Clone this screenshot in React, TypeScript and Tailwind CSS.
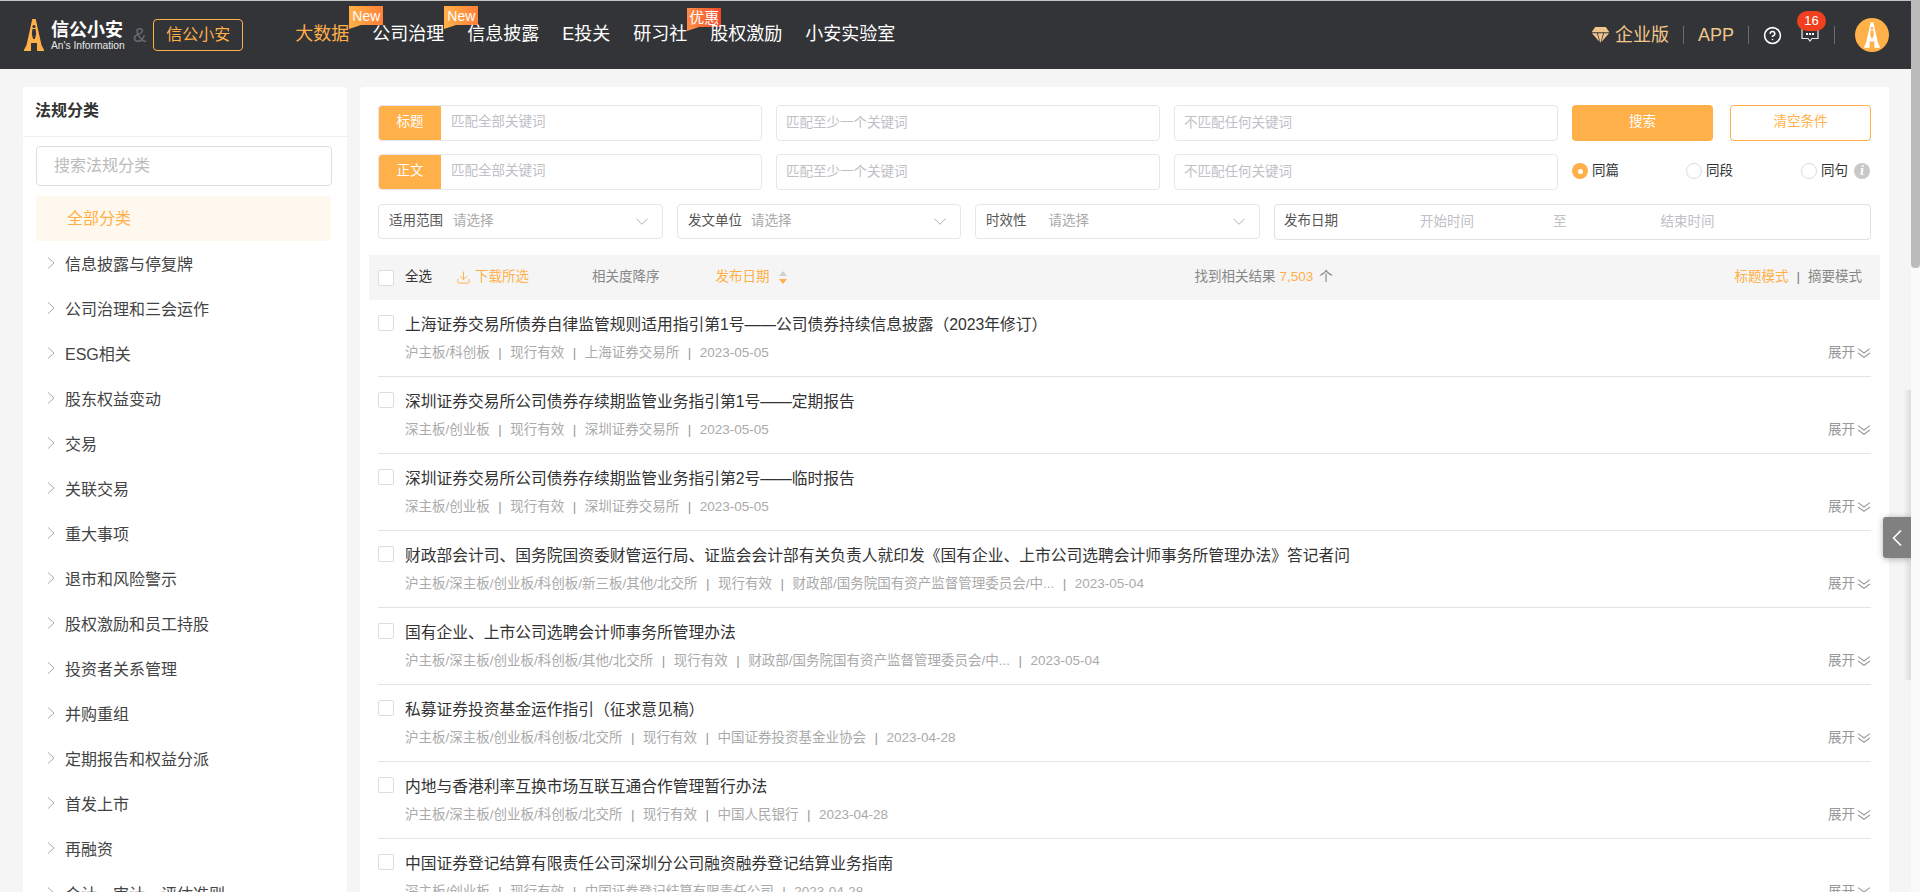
import { ChevronLeft, CircleHelp, Download } from "lucide-react";

const navItems = [
  { label: "大数据", active: true, badge: "New" },
  { label: "公司治理", badge: "New" },
  { label: "信息披露" },
  { label: "E投关" },
  { label: "研习社", badge: "优惠" },
  { label: "股权激励" },
  { label: "小安实验室" },
];

const categories = [
  "信息披露与停复牌",
  "公司治理和三会运作",
  "ESG相关",
  "股东权益变动",
  "交易",
  "关联交易",
  "重大事项",
  "退市和风险警示",
  "股权激励和员工持股",
  "投资者关系管理",
  "并购重组",
  "定期报告和权益分派",
  "首发上市",
  "再融资",
  "会计、审计、评估准则",
];

const results = [
  {
    title: "上海证券交易所债券自律监管规则适用指引第1号——公司债券持续信息披露（2023年修订）",
    meta: ["沪主板/科创板", "现行有效", "上海证券交易所", "2023-05-05"],
  },
  {
    title: "深圳证券交易所公司债券存续期监管业务指引第1号——定期报告",
    meta: ["深主板/创业板", "现行有效", "深圳证券交易所", "2023-05-05"],
  },
  {
    title: "深圳证券交易所公司债券存续期监管业务指引第2号——临时报告",
    meta: ["深主板/创业板", "现行有效", "深圳证券交易所", "2023-05-05"],
  },
  {
    title: "财政部会计司、国务院国资委财管运行局、证监会会计部有关负责人就印发《国有企业、上市公司选聘会计师事务所管理办法》答记者问",
    meta: ["沪主板/深主板/创业板/科创板/新三板/其他/北交所", "现行有效", "财政部/国务院国有资产监督管理委员会/中...", "2023-05-04"],
  },
  {
    title: "国有企业、上市公司选聘会计师事务所管理办法",
    meta: ["沪主板/深主板/创业板/科创板/其他/北交所", "现行有效", "财政部/国务院国有资产监督管理委员会/中...", "2023-05-04"],
  },
  {
    title: "私募证券投资基金运作指引（征求意见稿）",
    meta: ["沪主板/深主板/创业板/科创板/北交所", "现行有效", "中国证券投资基金业协会", "2023-04-28"],
  },
  {
    title: "内地与香港利率互换市场互联互通合作管理暂行办法",
    meta: ["沪主板/深主板/创业板/科创板/北交所", "现行有效", "中国人民银行", "2023-04-28"],
  },
  {
    title: "中国证券登记结算有限责任公司深圳分公司融资融券登记结算业务指南",
    meta: ["深主板/创业板", "现行有效", "中国证券登记结算有限责任公司", "2023-04-28"],
  },
];

const Tower = ({ className, body, cut }: { className: string; body: string; cut: string }) => (
  <svg viewBox="0 0 20 32" className={className}>
    <path fill={body} d="M8.3 0H11.7L15 15L17.5 26L20 31V32H13V24H7V32H0V31L2.5 26L5 15Z" />
    <circle cx="10" cy="7.5" r="1.6" fill={cut} />
    <path fill={cut} d="M8.4 10H11.6L12.2 15L10.9 20H9.1L7.8 15Z" />
  </svg>
);

const Badge = ({ text }: { text: string }) => {
  const hot = text === "优惠";
  return (
    <span className={`absolute left-full flex h-[19px] w-[34px] items-center justify-center ${hot ? "top-[-14px] bg-gradient-to-r from-[#ff8a45] to-[#f0482a] text-[15px]" : "top-[-16px] bg-gradient-to-r from-[#ffb048] to-[#ff8038] text-[14px]"} leading-none text-white`}>
      {text}
      <svg viewBox="0 0 12 4" className="absolute left-0 top-full h-[4px] w-[12px]">
        <path d="M0 0H12L0 4Z" fill={hot ? "#ff8a45" : "#ffb048"} />
      </svg>
    </span>
  );
};

const Header = () => (
  <header className="flex h-[69px] shrink-0 items-center border-t border-[#c4c4c4] bg-[#333438] pl-[24px] pr-[22px]">
    <Tower className="h-[32px] w-[20px]" body="#ffb048" cut="#333438" />
    <div className="ml-[7px] flex w-[74px] flex-col">
      <span className="text-[18px] font-bold leading-[20px] text-white">信公小安</span>
      <span className="whitespace-nowrap text-[10.25px] leading-[11px] text-[#e8e8e8]">An's Information</span>
    </div>
    <span className="ml-[8px] text-[20px] leading-none text-[#666a70]">&amp;</span>
    <button className="ml-[7px] h-[32px] w-[90px] rounded-[4px] border border-[#ffb048] text-[16px] text-[#ffb048]">信公小安</button>
    <nav className="mb-[2px] ml-[52px] flex items-center gap-[23px]">
      {navItems.map((item) => (
        <a key={item.label} className={`relative whitespace-nowrap text-[18px] leading-[24px] ${item.active ? "text-[#ffb048]" : "text-white"}`}>
          {item.label}
          {item.badge && <Badge text={item.badge} />}
        </a>
      ))}
    </nav>
    <div className="ml-auto flex items-center text-[18px] text-[#f0c68a]">
      <svg viewBox="0 0 20 18" className="h-[16px] w-[19px]">
        <path fill="#eec58c" d="M4 0H16L20 6H0ZM.3 7H6L9 17ZM7 7H13L10 18ZM14 7H19.7L11 17Z" />
      </svg>
      <span className="ml-[5px]">企业版</span>
      <span className="mx-[14px] h-[18px] w-px bg-[#6b6c70]" />
      <span>APP</span>
      <span className="mx-[14px] h-[18px] w-px bg-[#6b6c70]" />
      <CircleHelp className="text-white" size={19} strokeWidth={2} />
      <span className="relative ml-[19px] flex">
        <svg viewBox="0 0 18 14" className="h-[14px] w-[18px]">
          <path fill="none" stroke="#e8e8e8" strokeWidth="1.2" d="M1 .6H17V10.5H11L9 13L7 10.5H1Z" />
          <path fill="#fff" d="M5 5H7V7H5ZM8 5H10V7H8ZM11 5H13V7H11Z" />
        </svg>
        <span className="absolute left-[-4px] top-[-17px] flex h-[20px] w-[29px] items-center justify-center rounded-full bg-[#f0401e] text-[13px] text-white">16</span>
      </span>
      <span className="ml-[15px] h-[18px] w-px bg-[#6b6c70]" />
      <span className="ml-[20px] flex h-[34px] w-[34px] items-center justify-center rounded-full bg-[#ffb048]">
        <Tower className="h-[26px] w-[16px]" body="#fff" cut="#ffb048" />
      </span>
    </div>
  </header>
);

const Sidebar = () => (
  <aside className="h-[900px] w-[324px] shrink-0 rounded-t-[4px] bg-white">
    <h2 className="flex h-[50px] items-center border-b border-[#eeeef3] pb-[2px] pl-[12px] text-[16px] font-bold text-[#333]">法规分类</h2>
    <div className="px-[13px] pt-[9px]">
      <input
        placeholder="搜索法规分类"
        className="h-[40px] w-[296px] rounded-[4px] border border-[#dcdce6] px-[17px] text-[16px] outline-none placeholder:text-[#bbb]"
      />
      <div className="mt-[10px] flex h-[45px] w-[295px] items-center bg-[#fff8ef] pl-[31px] text-[16px] text-[#ffb048]">全部分类</div>
    </div>
    <ul className="mt-[1px]">
      {categories.map((name) => (
        <li key={name} className="flex h-[45px] items-center pl-[24px] text-[16px] text-[#444]">
          <svg viewBox="0 0 8 12" className="mb-[4px] h-[12px] w-[8px]">
            <path d="M1 .5L7 6L1 11.5" fill="none" stroke="#aaa" strokeWidth="1" />
          </svg>
          <span className="ml-[10px]">{name}</span>
        </li>
      ))}
    </ul>
  </aside>
);

const KeywordRow = ({ label }: { label: string }) => (
  <>
    <div className="flex h-[36px] w-[384px] overflow-hidden rounded-[4px] border border-[#e6e6ec]">
      <span className="flex w-[62px] shrink-0 items-center justify-center bg-[#ffb048] pb-[2px] text-[13.5px] text-white">{label}</span>
      <input placeholder="匹配全部关键词" className="min-w-0 flex-1 px-[10px] pb-[2px] text-[13.5px] outline-none placeholder:text-[#c0c0c6]" />
    </div>
    <input placeholder="匹配至少一个关键词" className="h-[36px] w-[384px] rounded-[4px] border border-[#e6e6ec] px-[9px] pb-[2px] text-[13.5px] outline-none placeholder:text-[#c0c0c6]" />
    <input placeholder="不匹配任何关键词" className="h-[36px] w-[384px] rounded-[4px] border border-[#e6e6ec] px-[9px] pb-[2px] text-[13.5px] outline-none placeholder:text-[#c0c0c6]" />
  </>
);

const SelectBox = ({ label, width, gap }: { label: string; width: string; gap: string }) => (
  <div className={`flex h-[35px] items-center rounded-[4px] border border-[#e6e6ec] pl-[10px] pr-[14px] text-[13.5px] ${width}`}>
    <span className="text-[#555]">{label}</span>
    <span className={`text-[#aaa] ${gap}`}>请选择</span>
    <svg viewBox="0 0 13 7" className="ml-auto h-[7px] w-[12px]">
      <path d="M.5 .5L6.5 6.5L12.5 .5" fill="none" stroke="#aaa" strokeWidth="1" />
    </svg>
  </div>
);

const Radio = ({ label, checked, width }: { label: string; checked?: boolean; width: string }) => (
  <label className={`flex items-center text-[13.5px] text-[#333] ${width}`}>
    {checked ? (
      <span className="flex h-[16px] w-[16px] items-center justify-center rounded-full bg-[#ffb048]">
        <span className="h-[5px] w-[5px] rounded-full bg-white" />
      </span>
    ) : (
      <span className="h-[16px] w-[16px] rounded-full border border-[#dcdce6]" />
    )}
    <span className="ml-[4px]">{label}</span>
  </label>
);

const Filters = () => (
  <section className="px-[18px] pt-[18px]">
    <div className="flex gap-[14px]">
      <KeywordRow label="标题" />
      <button className="h-[36px] w-[141px] rounded-[4px] bg-[#ffb048] pb-[2px] text-[13.5px] text-white">搜索</button>
      <button className="ml-[3px] h-[36px] w-[141px] rounded-[4px] border border-[#ffb048] pb-[2px] text-[13.5px] text-[#ffb048]">清空条件</button>
    </div>
    <div className="mt-[13px] flex items-center gap-[14px]">
      <KeywordRow label="正文" />
      <div className="mb-[2px] flex items-center">
        <Radio label="同篇" checked width="w-[114px]" />
        <Radio label="同段" width="w-[115px]" />
        <Radio label="同句" width="w-[53px]" />
        <span className="flex h-[16px] w-[16px] items-center justify-center rounded-full bg-[#c8c8c8] font-serif text-[13px] font-bold italic text-white">i</span>
      </div>
    </div>
    <div className="mt-[14px] flex gap-[14px]">
      <SelectBox label="适用范围" width="w-[285px]" gap="ml-[10px]" />
      <SelectBox label="发文单位" width="w-[284px]" gap="ml-[9px]" />
      <SelectBox label="时效性" width="w-[285px]" gap="ml-[22px]" />
      <div className="flex h-[36px] w-[597px] items-center rounded-[4px] border border-[#e0e0e8] pl-[9px] text-[13.5px] text-[#c0c0c6]">
        <span className="mb-[2px] text-[#555]">发布日期</span>
        <span className="ml-[82px]">开始时间</span>
        <span className="ml-[79px]">至</span>
        <span className="ml-[94px]">结束时间</span>
      </div>
    </div>
  </section>
);

const Toolbar = () => (
  <div className="mx-[9px] mt-[15px] flex h-[45px] items-center bg-[#f5f5f5] pl-[9px] pr-[18px] text-[13.5px] text-[#888]">
    <span className="h-[16px] w-[16px] rounded-[2px] border border-[#dcdce6] bg-white" />
    <span className="ml-[11px] text-[#333]">全选</span>
    <Download className="ml-[24px] text-[#ffb048]" size={15} strokeWidth={1.5} />
    <span className="ml-[4px] text-[#ffb048]">下载所选</span>
    <span className="ml-[63px]">相关度降序</span>
    <span className="ml-[56px] text-[#ffb048]">发布日期</span>
    <svg viewBox="0 0 8 13" className="ml-[9px] h-[13px] w-[8px]">
      <path fill="#d0d0d0" d="M4 0L8 5H0Z" />
      <path fill="#ffb048" d="M0 8H8L4 13Z" />
    </svg>
    <span className="ml-[408px]">找到相关结果</span>
    <span className="ml-[4px] text-[#ffb048]">7,503</span>
    <span className="ml-[6px]">个</span>
    <span className="ml-auto text-[#ffb048]">标题模式</span>
    <span className="mx-[8px] text-[#777]">|</span>
    <span>摘要模式</span>
  </div>
);

const ResultRow = ({ title, meta }: { title: string; meta: string[] }) => (
  <article className="relative flex h-[77px] border-b border-[#e4e4e4]">
    <span className="mt-[15px] h-[16px] w-[16px] shrink-0 rounded-[2px] border border-[#dcdce6]" />
    <div className="ml-[11px] min-w-0">
      <h3 className="mt-[13px] text-[15.75px] leading-[24px] text-[#333]">{title}</h3>
      <p className="mt-[4px] flex text-[13.5px] leading-[24px] text-[#aaa]">
        {meta.map((part, i) => (
          <span key={i} className="flex">
            {i > 0 && <span className="mx-[8.5px] text-[#999]">|</span>}
            {part}
          </span>
        ))}
      </p>
    </div>
    <span className="absolute bottom-[11px] right-0 flex items-center text-[13.5px] leading-[24px] text-[#999]">
      展开
      <svg viewBox="0 0 13 10" className="ml-[2px] h-[11px] w-[14px]">
        <path d="M1 .5L6.5 4.5L12 .5M1 4.5L6.5 8.5L12 4.5" fill="none" stroke="#999" strokeWidth="1" />
      </svg>
    </span>
  </article>
);

export default function App() {
  return (
    <div className="flex h-[892px] w-full overflow-hidden bg-[#f5f5f5] [font-family:'Liberation_Sans','Noto_Sans_CJK_SC',sans-serif]">
      <div className="relative flex min-w-0 flex-1 flex-col overflow-hidden">
        <Header />
        <main className="flex gap-[13px] pl-[23px] pt-[18px]">
          <Sidebar />
          <section className="h-[900px] w-[1529px] shrink-0 rounded-t-[4px] bg-white">
            <Filters />
            <Toolbar />
            <div className="px-[18px]">
              {results.map((row) => (
                <ResultRow key={row.title} title={row.title} meta={row.meta} />
              ))}
            </div>
          </section>
        </main>
        <div className="absolute right-0 top-[390px] h-[290px] w-[8px] bg-gradient-to-l from-black/10 to-transparent" />
        <button className="absolute right-0 top-[517px] flex h-[41px] w-[28px] items-center justify-center rounded-l-[3px] bg-[#808080] text-white shadow-[0_1px_6px_rgba(0,0,0,0.3)]">
          <ChevronLeft size={28} strokeWidth={1.5} />
        </button>
      </div>
      <div className="w-[9px] shrink-0 bg-[#fafafa]">
        <div className="h-[268px] rounded-b-[4px] bg-[#bbbbbb]" />
      </div>
    </div>
  );
}
